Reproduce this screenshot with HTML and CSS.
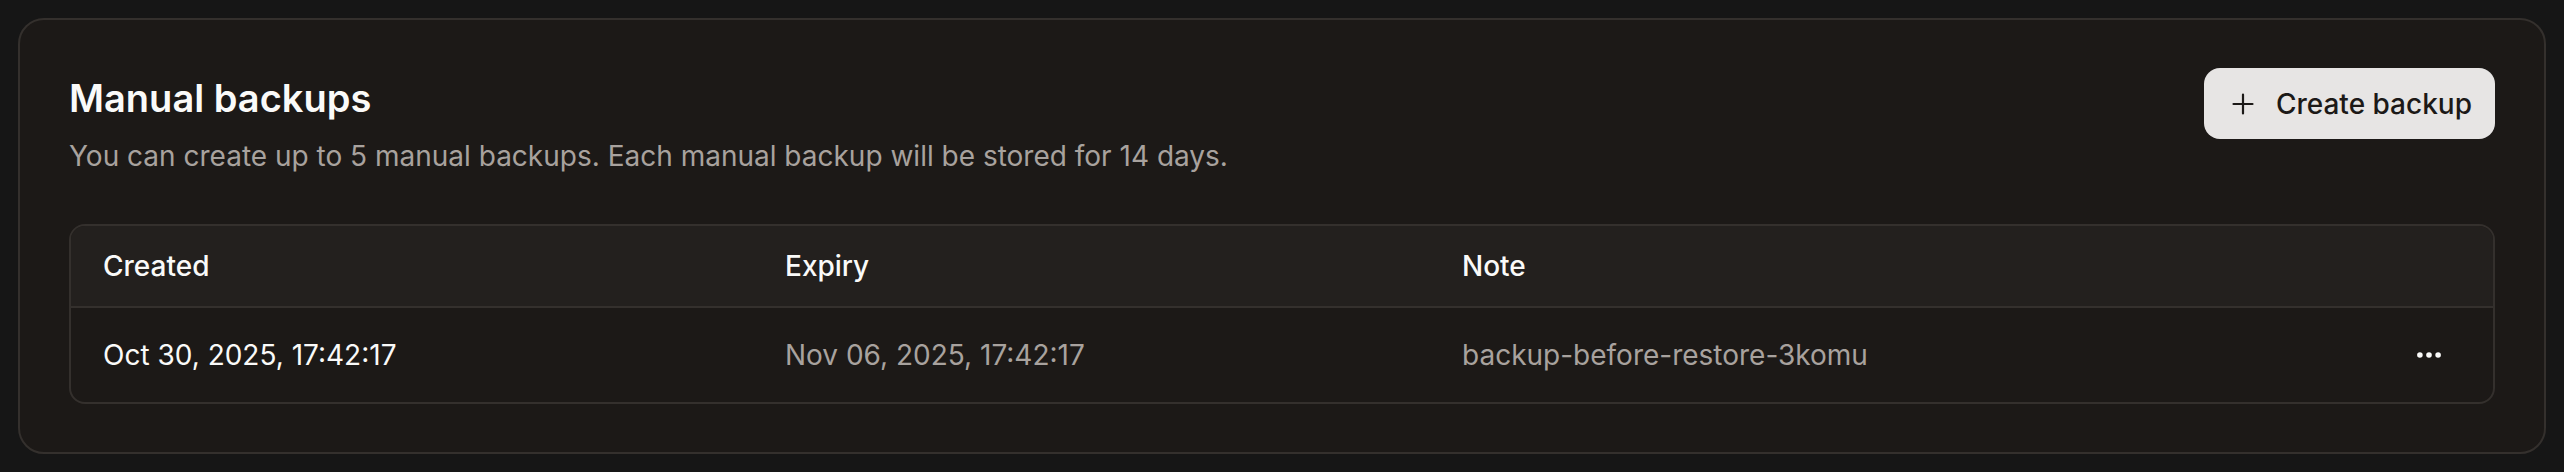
FILE: index.html
```html
<!DOCTYPE html>
<html lang="en">
<head>
<meta charset="utf-8">
<title>Manual backups</title>
<link rel="stylesheet" href="styles.css">
</head>
<body>
<section class="card">
  <header class="card-head">
    <div class="head-text">
      <h2 class="title">Manual backups</h2>
      <p class="subtitle">You can create up to 5 manual backups. Each manual backup will be stored for 14 days.</p>
    </div>
    <button class="btn" type="button">
      <svg class="btn-icon" viewBox="0 0 22 22" width="22" height="22" aria-hidden="true"><path d="M11 1.5v19M1.5 11h19" stroke="currentColor" stroke-width="2.2" stroke-linecap="round" fill="none"/></svg>
      <span>Create backup</span>
    </button>
  </header>
  <div class="table">
    <div class="row head-row">
      <div class="cell">Created</div>
      <div class="cell">Expiry</div>
      <div class="cell">Note</div>
      <div class="cell"></div>
    </div>
    <div class="row body-row">
      <div class="cell primary">Oct 30, 2025, 17:42:17</div>
      <div class="cell muted">Nov 06, 2025, 17:42:17</div>
      <div class="cell muted">backup-before-restore-3komu</div>
      <div class="cell actions">
        <svg class="dots" viewBox="0 0 24 6" width="24" height="6" aria-hidden="true"><circle cx="2.9" cy="3" r="2.8"/><circle cx="12" cy="3" r="2.8"/><circle cx="21.1" cy="3" r="2.8"/></svg>
      </div>
    </div>
  </div>
</section>
</body>
</html>
```
FILE: styles.css
```css
* { box-sizing: border-box; }
html, body { margin: 0; }
body {
  background: #161616;
  padding: 18px;
  font-family: Inter, "Noto Sans", sans-serif;
  color: #fafaf9;
}
.card {
  background: #1c1917;
  border: 2px solid #34302d;
  border-radius: 26px;
  padding: 48px 49px 48px 49px;
  height: 436px;
}
.card-head {
  display: flex;
  justify-content: space-between;
  align-items: flex-start;
}
.title {
  margin: 7px 0 0;
  font-size: 38px;
  line-height: 46px;
  font-weight: 600;
  letter-spacing: 0;
  color: #fafaf9;
}
.subtitle {
  margin: 16px 0 0;
  font-size: 28px;
  line-height: 38px;
  color: #a8a29e;
}
.btn {
  display: flex;
  align-items: center;
  gap: 22px;
  height: 71px;
  padding: 0 23px 0 28px;
  background: #e7e5e4;
  color: #1c1917;
  border: 0;
  border-radius: 16px;
  font-family: Inter, "Noto Sans", sans-serif;
  font-size: 28px;
  font-weight: 500;
}
.btn-icon { display: block; }
.table {
  margin-top: 49px;
  border: 2px solid #34302d;
  border-radius: 16px;
  overflow: hidden;
}
.row {
  display: grid;
  grid-template-columns: 682px 677px 1fr 128px;
  align-items: center;
}
.head-row {
  background: #23201e;
  height: 80px;
  font-weight: 500;
}
.body-row {
  border-top: 2px solid #34302d;
  height: 96px;
}
.cell {
  padding: 0 32px;
  font-size: 28px;
  line-height: 38px;
  white-space: nowrap;
}
.primary { color: #fafaf9; }
.muted { color: #a8a29e; }
.actions { display: flex; justify-content: center; padding: 0; }
.dots { display: block; fill: #fafaf9; }
```
